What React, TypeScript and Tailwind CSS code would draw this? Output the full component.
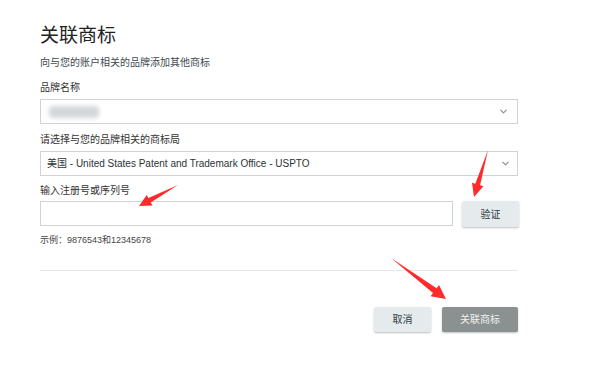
import { ChevronDown } from "lucide-react";

const font = { fontFamily: '"Liberation Sans", "Noto Sans CJK SC", sans-serif' };

function Arrows() {
  return (
    <svg className="pointer-events-none absolute inset-0" width="607" height="383" viewBox="0 0 607 383">
      <g fill="#ff2b2b">
        <polygon points="178,185 150.8,202.5 152.5,205.6 139,206 146.7,195 148.4,198.1" />
        <polygon points="488,150 480.1,185.2 483.4,186.2 474,197 472,182.8 475.3,183.8" />
        <polygon points="391,258 433,293 430.6,296.2 446,299 439,285 436.6,288.2" />
      </g>
    </svg>
  );
}

export default function App() {
  return (
    <div className="relative h-[383px] w-[607px] overflow-hidden bg-white text-[#333]" style={font}>
      <div className="w-[518px] pl-10 pt-[24px]">
        <h1 className="text-[19px] leading-[24px] text-[#222]">关联商标</h1>
        <p className="mt-[9px] text-[10px] leading-[12px] text-[#3d4a4f]">向与您的账户相关的品牌添加其他商标</p>

        <label className="mt-[13px] block text-[10px] leading-[12px]">品牌名称</label>
        <div className="mt-[5px] flex h-[25px] items-center justify-between border border-[#cfd3d4] px-2">
          <div className="h-[12px] w-[50px] rounded-sm bg-[#d4d6d8] blur-[2px]" />
          <ChevronDown className="size-[11px] text-[#8a8f91]" strokeWidth={2.5} />
        </div>

        <label className="mt-[10px] block text-[10px] leading-[12px]">请选择与您的品牌相关的商标局</label>
        <div className="mt-[5px] flex h-[25px] items-center justify-between border border-[#cfd3d4] px-[6px]">
          <span className="text-[10px] text-[#2a3438]">美国 - United States Patent and Trademark Office - USPTO</span>
          <ChevronDown className="size-[11px] text-[#8a8f91]" strokeWidth={2.5} />
        </div>

        <label className="mt-[9px] block text-[10px] leading-[12px]">输入注册号或序列号</label>
        <div className="mt-[4px] flex gap-[9px]">
          <input className="h-[25px] w-[413px] shrink-0 border border-[#cfd3d4] outline-none" />
          <button className="h-[26px] w-[57px] shrink-0 rounded-[2px] bg-[#e5ebed] text-[10px] text-[#2f3a3e] shadow-[0_1px_2px_rgba(0,0,0,0.25)]">
            验证
          </button>
        </div>

        <p className="mt-[7px] text-[9px] leading-[12px] text-[#444]">示例：9876543和12345678</p>

        <div className="mt-[24px] h-px bg-[#e6e8e9]" />

        <div className="mt-[36px] flex justify-end gap-[11px]">
          <button className="h-[25px] w-[57px] rounded-[2px] bg-[#e5ebed] text-[10px] text-[#2f3a3e] shadow-[0_1px_2px_rgba(0,0,0,0.25)]">
            取消
          </button>
          <button className="h-[25px] w-[76px] rounded-[2px] bg-[#8b9191] text-[10px] text-[#eef0f0] shadow-[0_1px_2px_rgba(0,0,0,0.25)]">
            关联商标
          </button>
        </div>
      </div>
      <Arrows />
    </div>
  );
}
